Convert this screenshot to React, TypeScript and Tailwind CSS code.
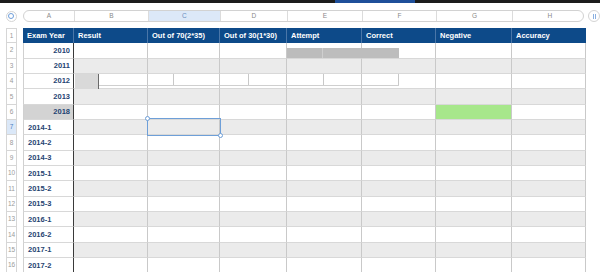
import React from "react";

const colW = [
  "w-[51px]",
  "w-[74px]",
  "w-[72px]",
  "w-[67px]",
  "w-[75px]",
  "w-[74px]",
  "w-[76px]",
  "w-[74px]",
];
const letters = ["A", "B", "C", "D", "E", "F", "G", "H"];
const heads = [
  "Exam Year",
  "Result",
  "Out of 70(2*35)",
  "Out of 30(1*30)",
  "Attempt",
  "Correct",
  "Negative",
  "Accuracy",
];
const years = [
  "2010",
  "2011",
  "2012",
  "2013",
  "2018",
  "2014-1",
  "2014-2",
  "2014-3",
  "2015-1",
  "2015-2",
  "2015-3",
  "2016-1",
  "2016-2",
  "2017-1",
  "2017-2",
];

function RowHead({ n, sel }: { n: number; sel?: boolean }) {
  return (
    <div
      className={
        "ml-[6px] mr-[6px] flex w-[11px] shrink-0 items-center justify-center border-x border-b border-[#d6d6d6] text-[6.5px] " +
        (sel ? "bg-[#dbe8f8] text-[#4a7fc4]" : "bg-white text-[#9a9a9a]")
      }
    >
      {n}
    </div>
  );
}

export default function App() {
  return (
    <div className="relative h-[272px] w-[600px] overflow-hidden bg-white font-['Liberation_Sans',Arial,sans-serif]">
      {/* top strip */}
      <div className="flex h-[3px]">
        <div className="w-[335px] bg-[#1c1c1c]" />
        <div className="w-[80px] bg-[#1f4f9a]" />
        <div className="flex-1 bg-[#1c1c1c]" />
      </div>

      {/* column letters */}
      <div className="mt-[7px] flex h-[12px] items-center">
        <div className="ml-[6px] flex h-[11px] w-[11px] items-center justify-center rounded-full border border-[#d4d4d4]">
          <div className="h-[6px] w-[6px] rounded-full border border-[#6d9edb]" />
        </div>
        <div className="ml-[6px] flex h-[12px] overflow-hidden rounded-full border border-[#d2d2d2]">
          {letters.map((l, i) => (
            <div
              key={l}
              className={
                colW[i] +
                " flex shrink-0 items-center justify-center text-[6.5px] " +
                (i < 7 ? "border-r border-[#dcdcdc] " : "") +
                (i === 2 ? "bg-[#dce8f8] text-[#6a8fc0]" : "text-[#8a8a8a]")
              }
            >
              {l}
            </div>
          ))}
        </div>
        <div className="ml-[4px] flex h-[12px] w-[12px] shrink-0 items-center justify-center rounded-full border border-[#d4d4d4]">
          <div className="h-[5px] w-[3px] border-x border-[#8bb0e0]" />
        </div>
      </div>

      {/* grid */}
      <div className="mt-[5.8px] flex flex-col">
        {/* header row */}
        <div className="flex h-[15.36px]">
          <div className="ml-[6px] mr-[6px] flex w-[11px] shrink-0 items-center justify-center border border-[#d6d6d6] text-[6.5px] text-[#9a9a9a]">
            1
          </div>
          {heads.map((h, i) => (
            <div
              key={h}
              className={
                colW[i] +
                " flex shrink-0 items-center whitespace-nowrap bg-[#0d4a89] pl-[4px] text-[7.5px] font-bold text-white " +
                (i < 7 ? "border-r border-[#4a76a8]" : "")
              }
            >
              {h}
            </div>
          ))}
        </div>

        {years.map((y, r) => {
          const rowNum = r + 2;
          const grey = rowNum % 2 === 1;
          return (
            <div key={y} className="relative flex h-[15.36px]">
              <RowHead n={rowNum} sel={rowNum === 7} />
              {letters.map((_, c) => {
                if (c === 0) {
                  return (
                    <div
                      key={c}
                      className={
                        colW[0] +
                        " flex shrink-0 items-center border-b border-l border-r border-b-[#d8d8d8] border-l-[#d0d0d0] border-r-[#3a3a3a] text-[7.5px] font-bold text-[#1f4472] " +
                        (rowNum <= 6 ? "justify-end pr-[3px] " : "justify-start pl-[4px] ") +
                        (rowNum === 6 ? "bg-[#d3d3d3]" : "bg-white")
                      }
                    >
                      {y}
                    </div>
                  );
                }
                const green = rowNum === 6 && c === 6;
                return (
                  <div
                    key={c}
                    className={
                      colW[c] +
                      " shrink-0 border-b border-r border-b-[#d8d8d8] border-r-[#c9c9c9] " +
                      (green ? "bg-[#a7e78b]" : grey ? "bg-[#ebebeb]" : "bg-white")
                    }
                  />
                );
              })}

              {rowNum === 2 && (
                <div className="absolute left-[287px] top-[5px] flex h-[10px] w-[112px]">
                  <div className="w-[36px] border-r border-[#cfcfcf] bg-[#bcbcbc]" />
                  <div className="flex-1 bg-[#bdbdbd]" />
                </div>
              )}

              {rowNum === 4 && (
                <div className="absolute left-[75px] top-[0px] flex h-[15px]">
                  <div className="w-[23px] bg-[#d9d9d9]" />
                  <div className="flex w-[300px] border-l border-[#6a6a6a]">
                    <div className="flex h-[12px] flex-1 border-b border-[#cfcfcf]">
                      <div className="w-[75px] border-r border-[#c8c8c8]" />
                      <div className="w-[75px] border-r border-[#c8c8c8]" />
                      <div className="w-[75px] border-r border-[#c8c8c8]" />
                      <div className="w-[75px] border-r border-[#c8c8c8]" />
                    </div>
                  </div>
                </div>
              )}

              {rowNum === 7 && (
                <div className="absolute left-[147px] top-[-2px] z-10 h-[18px] w-[74px] border border-[#6e9fd8]">
                  <div className="absolute left-[-3px] top-[-3px] h-[5px] w-[5px] rounded-full border border-[#6e9fd8] bg-white" />
                  <div className="absolute bottom-[-3px] right-[-3px] h-[5px] w-[5px] rounded-full border border-[#6e9fd8] bg-white" />
                </div>
              )}
            </div>
          );
        })}
      </div>
    </div>
  );
}
